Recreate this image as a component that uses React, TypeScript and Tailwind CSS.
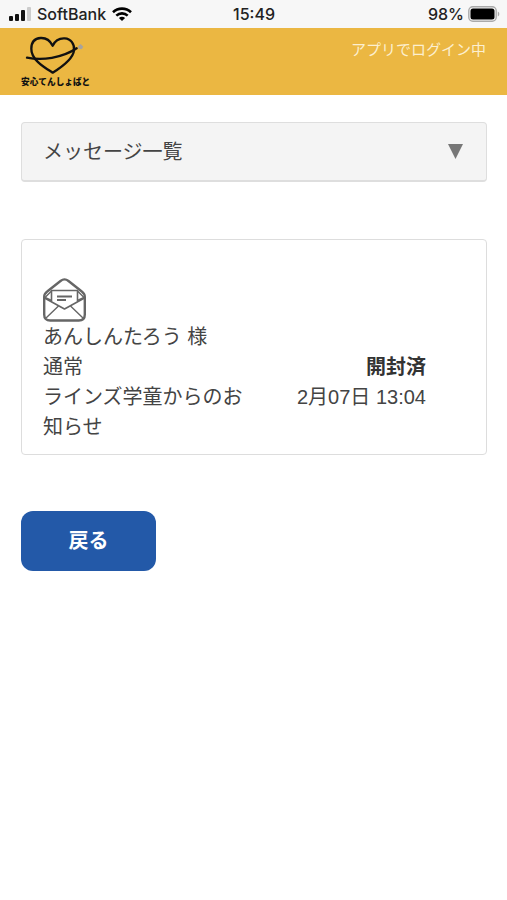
import React from 'react';

const App = () => (
  <div className="min-h-screen bg-white font-['Liberation_Sans','Noto_Sans_CJK_JP',sans-serif] text-[#444]">
    <StatusBar />
    <Header />
    <main className="pt-[27px] pr-5 pl-[21px]">
      <MessageMenu />
      <MessageCard />
      <button
        type="button"
        className="mt-14 h-[60px] w-[135px] rounded-xl bg-[#2359a8] text-xl font-bold text-white"
      >
        戻る
      </button>
    </main>
  </div>
);

const StatusBar = () => (
  <div className="grid h-7 grid-cols-3 items-center bg-[#f7f7f7] pr-[7px] pl-2 font-['Inter',sans-serif] text-base font-medium text-[#222]">
    <div className="flex items-center gap-1.5">
      <SignalIcon />
      <span>SoftBank</span>
      <WifiIcon />
    </div>
    <span className="text-center">15:49</span>
    <div className="flex items-center justify-end gap-1">
      <span>98%</span>
      <BatteryIcon />
    </div>
  </div>
);

const SignalIcon = () => (
  <svg width="23" height="14" viewBox="0 0 23 14" aria-hidden="true">
    <rect x="1" y="9" width="4" height="5" rx="1" fill="#111" />
    <rect x="7" y="7" width="4" height="7" rx="1" fill="#111" />
    <rect x="13" y="3" width="4" height="11" rx="1" fill="#111" />
    <rect x="19" y="0" width="4" height="14" rx="1" fill="#ccc" />
  </svg>
);

const WifiIcon = () => (
  <svg width="20" height="14" viewBox="0 0 20 14" fill="none" stroke="#000" strokeWidth="2.6" aria-hidden="true">
    <path d="M1 5.2C6 .4 14 .4 19 5.2" />
    <path d="M4.3 8.6c3.3-3 8.1-3 11.4 0" />
    <path d="M10 14 6.9 11c1.8-1.6 4.4-1.6 6.2 0Z" fill="#000" stroke="none" />
  </svg>
);

const BatteryIcon = () => (
  <svg width="32" height="16" viewBox="0 0 32 16" aria-hidden="true">
    <rect x=".8" y=".8" width="27.4" height="14.4" rx="4" fill="none" stroke="#aaa" strokeWidth="1.4" />
    <rect x="2.5" y="2.5" width="24" height="11" rx="2.5" fill="#000" />
    <path d="M29.8 5.5c2 .8 2 4.2 0 5Z" fill="#aaa" />
  </svg>
);

const Header = () => (
  <header className="flex h-[67px] items-start justify-between bg-[#ebb742] pt-2 pr-[21px] pl-5">
    <Logo />
    <span className="pt-1 text-[15px] leading-5 text-[#fcefd0]">アプリでログイン中</span>
  </header>
);

const Logo = () => (
  <svg width="70" height="54" viewBox="0 0 210 162" fill="none" role="img" aria-label="安心てんしょばと">
    <path
      d="M98 110C80 98 33 73 34 38C34 17 46 7 62 6C80 5 91 15 98 29C105 14 117 6 134 7C153 8 164 24 162 43C159 70 119 97 98 110Z"
      stroke="#111"
      strokeWidth="7"
      strokeLinejoin="round"
    />
    <path d="M21 65C66 74 125 67 170 37" stroke="#111" strokeWidth="7" strokeLinecap="round" />
    <path d="m174 31 8-7 8 8-5 8-9-2Z" fill="#a8a39c" />
    <text
      x="3"
      y="148"
      fontSize="26"
      fontWeight="900"
      fill="#111"
      fontFamily="'Noto Sans CJK JP', sans-serif"
    >
      安心てんしょばと
    </text>
  </svg>
);

const MessageMenu = () => (
  <div className="relative">
    <select
      aria-label="メニュー"
      className="block h-[60px] w-full appearance-none rounded border border-b-2 border-[#dedede] bg-[#f4f4f4] pr-14 pl-[21px] text-xl text-[#444]"
    >
      <option>メッセージ一覧</option>
    </select>
    <svg
      className="pointer-events-none absolute top-[22px] right-6"
      width="15"
      height="15"
      viewBox="0 0 15 15"
      aria-hidden="true"
    >
      <path d="M0 0h15L7.5 15Z" fill="#777" />
    </svg>
  </div>
);

const MessageCard = () => (
  <section className="mt-[57px] rounded border border-[#ddd] pt-[38px] pr-[60px] pb-3 pl-[21px] text-xl leading-[30px]">
    <EnvelopeIcon />
    <p>あんしんたろう 様</p>
    <div className="grid grid-cols-[55%_45%]">
      <span>通常</span>
      <strong className="text-right text-[#333]">開封済</strong>
      <span>ラインズ学童からのお知らせ</span>
      <time className="text-right">2月07日 13:04</time>
    </div>
  </section>
);

const EnvelopeIcon = () => (
  <svg width="43" height="44" viewBox="0 0 43 44" fill="none" stroke="#666" strokeLinejoin="round" aria-hidden="true">
    <path
      d="M1.2 19c0-2.500 1-4 3-5.500L17.500 3c2.700-2.200 5.300-2.200 8 0l13.300 10.500c2 1.500 3 3 3 5.500v17.500c0 4-2 6-6 6H7.200c-4 0-6-2-6-6Z"
      strokeWidth="2.4"
    />
    <path d="M8.5 24V12.5h26V24M1.500 20l20 11 20-11" strokeWidth="1.6" />
    <path d="m3 40 12.500-12M40 40 27.500 28M8.500 13 2 19.500l6.500 3M34.500 13l6.500 6.500-6.500 3" strokeWidth="1.4" />
    <path d="M14 18.500h15M14 22h9" strokeWidth="1.8" />
  </svg>
);

export default App;
